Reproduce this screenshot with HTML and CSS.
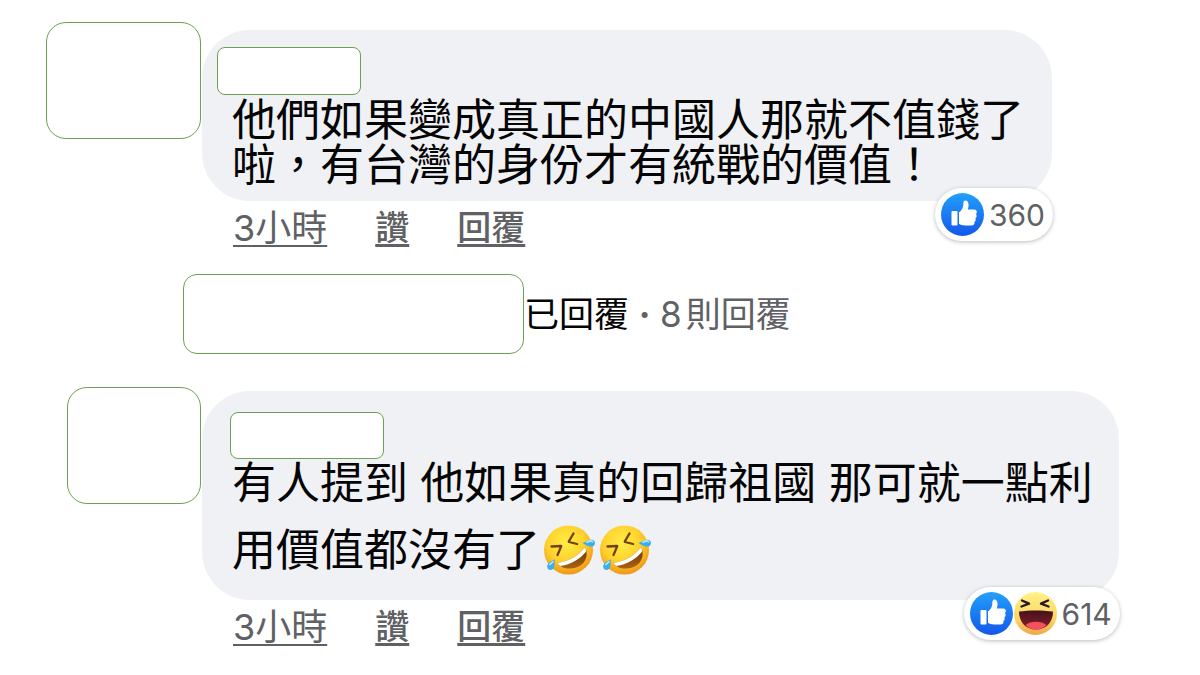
FILE: index.html
```html
<!DOCTYPE html>
<html lang="zh-Hant-TW">
<head>
<meta charset="utf-8">
<meta name="viewport" content="width=device-width, initial-scale=1">
<title>留言</title>
<link rel="stylesheet" href="styles.css">
</head>
<body>
<svg class="defs" aria-hidden="true">
  <defs>
    <linearGradient id="blue" x1="0" y1="0" x2="0" y2="1"><stop offset="0" stop-color="#22a0fb"/><stop offset="1" stop-color="#1457ea"/></linearGradient>
    <linearGradient id="yellow" x1="0" y1="0" x2="0" y2="1"><stop offset="0" stop-color="#fff287"/><stop offset=".65" stop-color="#fbd463"/><stop offset="1" stop-color="#f2a34a"/></linearGradient>
    <radialGradient id="gold" cx=".45" cy=".35" r=".65"><stop offset="0" stop-color="#ffee45"/><stop offset=".6" stop-color="#ffd02c"/><stop offset="1" stop-color="#ef961b"/></radialGradient>
    <linearGradient id="mouth" x1="0" y1="0" x2="0" y2="1"><stop offset="0" stop-color="#44131b"/><stop offset="1" stop-color="#871d2d"/></linearGradient>
    <linearGradient id="grin" x1="0" y1="0" x2="0" y2="1"><stop offset="0" stop-color="#6b3208"/><stop offset="1" stop-color="#a8640f"/></linearGradient>
    <symbol id="like" viewBox="0 0 43 43">
      <circle cx="21.500" cy="21.500" r="21.500" fill="url(#blue)"/>
      <path fill="#fff" d="M11.500 18h4q1 0 1 1v12.500q0 1-1 1h-4q-1 0-1-1V19q0-1 1-1ZM18 19.500c2.500-2 4-4 4.300-7.500.1-2.700.2-4 1.700-4.400 2-.4 3.600 1.800 3.600 4.400 0 2-.5 3.200-.8 4.500h6.400c2.600 0 3.500 3.200 1.700 4.500 1.200 1.300.9 3.400-.5 4.300.7 1.500.2 3.100-1 3.700.5 2-.6 3.500-3 3.500h-6.200c-3 0-4.700-.7-6.200-1.700Z"/>
    </symbol>
    <symbol id="haha" viewBox="0 0 43 43">
      <circle cx="21.500" cy="21.500" r="21.500" fill="url(#yellow)"/>
      <path d="M5 19.500c10-1.500 23-1.500 34 0 0 10-6 18-17 18s-17-8-17-18Z" fill="url(#mouth)"/>
      <path d="M11.500 33c4.500-4.500 16.500-4.500 21 0-5.500 6-15.500 6-21 0Z" fill="#f4505d"/>
      <path d="m8 8.500 7 3.200-7.500 2.800M34 8.500l-7 3.200 7.500 2.800" fill="none" stroke="#2c1922" stroke-width="2.400" stroke-linecap="round" stroke-linejoin="round"/>
    </symbol>
    <symbol id="rofl" viewBox="0 0 54 50">
      <circle cx="26.500" cy="25" r="24.500" fill="url(#gold)"/>
      <path d="M15.500 38C28 36 37 30.500 43 22c5 11-2 20-12.500 21.300-6.500.8-12-.5-15-5.300Z" fill="url(#grin)"/>
      <path d="M15.500 38C28 36 37 30.500 43 22c1 2 1.200 3.600.8 5C38 34 29 39.500 18.500 41c-1.200-.8-2.200-1.700-3-3Z" fill="#fff"/>
      <path d="M9.500 21.500 19 21c.3 0 .3.300.1.600L15.500 30M31.500 8.500l-4.700 7.800c-.2.400 0 .6.300.7l8 2" fill="none" stroke="#754011" stroke-width="2.300" stroke-linecap="round" stroke-linejoin="round"/>
      <path d="M40.500 18c3.500-1 6-3.300 9.200-3.300 4.300 0 4.300 6.400.3 6.800-3.500.4-6.500-1.500-9.500-3.500ZM13 34.500c-4.300 1.500-9 4.500-7.500 8.500 1.500 3.300 6 2 6.700-1 .6-2.500 0-5 .8-7.500Z" fill="#3caee9"/>
      <path d="M45 17.300c2-1.200 4-1.700 5.500-.8M8 39.500c1-1.300 2-2.200 3-2.800" stroke="#a8e6ff" stroke-width="1.800" stroke-linecap="round" fill="none"/>
    </symbol>
  </defs>
</svg>
<main class="thread">
  <article class="comment">
    <div class="avatar avatar-wide"></div>
    <div class="content">
      <div class="bubble">
        <div class="name"></div>
        <p class="text">他們如果變成真正的中國人那就不值錢了<br>啦，有台灣的身份才有統戰的價值！</p>
        <button class="reactions" type="button" aria-label="360 個心情">
          <svg class="reaction" aria-hidden="true"><use href="#like"/></svg><span class="count">360</span>
        </button>
      </div>
      <div class="actions">
        <a class="time" href="#">3小時</a>
        <button class="action" type="button">讚</button>
        <button class="action" type="button">回覆</button>
      </div>
    </div>
  </article>

  <div class="replies">
    <div class="replier"></div>
    <a class="reply-link" href="#"><span class="replied">已回覆</span><span class="dot">·</span><span>8</span><span class="unit">則回覆</span></a>
  </div>

  <article class="comment">
    <div class="avatar"></div>
    <div class="content content-loose">
      <div class="bubble bubble-loose">
        <div class="name name-inset"></div>
        <p class="text text-loose">有人提到 他如果真的回歸祖國 那可就一點利<br>用價值都沒有了<svg class="emoji" role="img" aria-label="笑到打滾"><use href="#rofl"/></svg><svg class="emoji" role="img" aria-label="笑到打滾"><use href="#rofl"/></svg></p>
        <button class="reactions" type="button" aria-label="614 個心情">
          <svg class="reaction" aria-hidden="true"><use href="#like"/></svg><svg class="reaction" aria-hidden="true"><use href="#haha"/></svg><span class="count">614</span>
        </button>
      </div>
      <div class="actions">
        <a class="time" href="#">3小時</a>
        <button class="action" type="button">讚</button>
        <button class="action" type="button">回覆</button>
      </div>
    </div>
  </article>
</main>
</body>
</html>
```
FILE: styles.css
```css
* { box-sizing: border-box; }
body {
  margin: 0;
  background: #fff;
  color: #050505;
  font-family: Inter, "Noto Sans CJK TC", sans-serif;
}
button {
  padding: 0;
  border: 0;
  background: none;
  font: inherit;
  color: inherit;
  cursor: pointer;
}
.defs { position: absolute; width: 0; height: 0; }
.thread { padding: 22px 40px; }
.comment {
  display: grid;
  grid-template-columns: 161px minmax(0, 1fr);
  column-gap: 1px;
  align-items: start;
}
.avatar, .name, .replier {
  border: 1px solid #6aa253;
  background: #fff;
}
.avatar {
  justify-self: end;
  width: 134px;
  height: 117px;
  border-radius: 20px;
}
.avatar-wide { width: 155px; }
.content { padding-top: 8px; }
.content-loose { padding-top: 4px; }
.bubble {
  position: relative;
  width: fit-content;
  padding: 17px 28px 13px 15px;
  border-radius: 48px;
  background: #f0f1f5;
}
.bubble-loose { padding: 21px 26px 16px 15px; }
.name {
  width: 144px;
  height: 48px;
  border-radius: 8px;
}
.name-inset { width: 154px; height: 47px; margin-left: 13px; }
.text {
  margin: 0;
  padding: 3px 0 0 15px;
  font-size: 44px;
  line-height: 45px;
}
.text-loose { margin-top: -9px; padding-top: 0; line-height: 67px; }
.emoji {
  width: 54px;
  height: 50px;
  margin-left: 2px;
  vertical-align: -9px;
}
.reactions {
  position: absolute;
  right: -1px;
  bottom: -40px;
  display: flex;
  align-items: center;
  gap: 1px;
  height: 53px;
  padding: 0 8px 0 6px;
  border-radius: 27px;
  background: #fff;
  box-shadow: 0 1px 4px #0004;
}
.reaction { width: 43px; height: 43px; }
.count {
  margin-left: 4px;
  font-size: 30px;
  color: #606164;
}
.actions {
  display: flex;
  align-items: center;
  gap: 48px;
  height: 54px;
  padding-left: 31px;
  color: #606164;
  font-size: 34px;
  line-height: 48px;
}
.time, .action {
  color: inherit;
  text-decoration: underline;
  text-decoration-skip-ink: none;
  text-underline-offset: 4px;
}
.time {
  font-size: 36px;
  text-decoration-thickness: 2px;
}
.action { font-weight: 500; text-decoration-thickness: 3px; }
.replies {
  display: flex;
  align-items: center;
  padding: 19px 0 33px 143px;
}
.replier {
  width: 341px;
  height: 80px;
  border-radius: 14px;
}
.reply-link {
  display: flex;
  color: #606164;
  font-size: 35px;
  line-height: 48px;
  text-decoration: none;
}
.replied { color: #050505; }
.dot { width: 31px; text-align: center; font-weight: 700; }
.unit { margin-left: 4px; }
```
